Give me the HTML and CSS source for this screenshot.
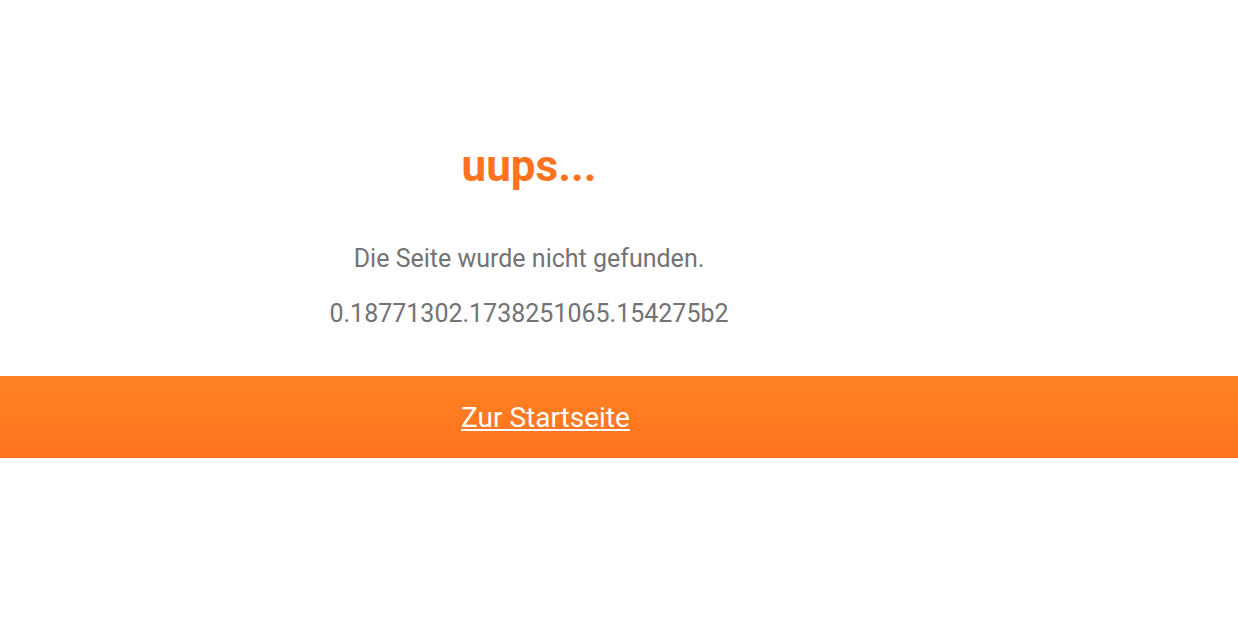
FILE: index.html
```html
<!DOCTYPE html>
<html lang="de">
<head>
  <meta charset="UTF-8" />
  <title>Seite nicht gefunden</title>
  <link rel="stylesheet" href="styles.css">
</head>
<body>

  <!-- Fehlermeldung -->
  <div class="fehler">
    <h1 class="titel">uups...</h1>
    <p class="text">Die Seite wurde nicht gefunden.</p>
    <p class="text">0.18771302.1738251065.154275b2</p>
  </div>

  <!-- Balken mit Link -->
  <div class="balken">
    <div class="balken-inhalt">
      <a href="#" class="start-link">Zur Startseite</a>
    </div>
  </div>

</body>
</html>
```

FILE: styles.css
```css
body {
  font-family: 'Roboto', 'Liberation Sans', sans-serif;
  background-color: #fff;
  margin: 0;
  padding: 0;
}

.fehler {
  width: 1058px;
  padding-top: 137px;
  text-align: center;
}

.titel {
  color: #ff7320;
  font-size: 44px;
  font-weight: bold;
  margin: 0 0 49px 0;
  line-height: 58px;
}

.text {
  color: #737373;
  font-size: 25px;
  line-height: 30px;
  margin: 0 0 25px 0;
}

.balken {
  margin-top: 47px;
  height: 82px;
  background: linear-gradient(to bottom, #ff8221, #ff7220);
  display: flex;
  align-items: center;
}

.balken-inhalt {
  padding-left: 461px;
}

.start-link {
  color: #fff;
  font-size: 28px;
  text-decoration: underline;
}
```
